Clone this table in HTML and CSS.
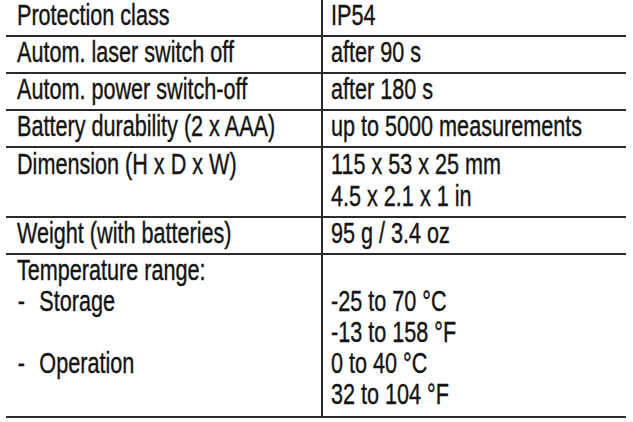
FILE: index.html
```html
<!DOCTYPE html>
<html lang="en">
<head>
<meta charset="utf-8">
<title>Technical data</title>
<link rel="stylesheet" href="styles.css">
</head>
<body>
<div class="spec">
  <div class="row">
    <div class="cell key"><div class="txt">Protection class</div></div>
    <div class="cell val"><div class="txt">IP54</div></div>
  </div>
  <div class="row">
    <div class="cell key"><div class="txt">Autom. laser switch off</div></div>
    <div class="cell val"><div class="txt">after 90 s</div></div>
  </div>
  <div class="row">
    <div class="cell key"><div class="txt">Autom. power switch-off</div></div>
    <div class="cell val"><div class="txt">after 180 s</div></div>
  </div>
  <div class="row">
    <div class="cell key"><div class="txt">Battery durability (2 x AAA)</div></div>
    <div class="cell val"><div class="txt">up to 5000 measurements</div></div>
  </div>
  <div class="row dim">
    <div class="cell key"><div class="txt">Dimension (H x D x W)</div></div>
    <div class="cell val"><div class="txt">115 x 53 x 25 mm<br>4.5 x 2.1 x 1 in</div></div>
  </div>
  <div class="row">
    <div class="cell key"><div class="txt">Weight (with batteries)</div></div>
    <div class="cell val"><div class="txt">95 g / 3.4 oz</div></div>
  </div>
  <div class="row temp">
    <div class="cell key">
      <div class="txt">
        <div class="line">Temperature range:</div>
        <div class="line sub"><span class="dash">-</span>Storage</div>
        <div class="line">&nbsp;</div>
        <div class="line sub"><span class="dash">-</span>Operation</div>
      </div>
    </div>
    <div class="cell val">
      <div class="txt">
        <div class="line">&nbsp;</div>
        <div class="line">-25 to 70 °C</div>
        <div class="line">-13 to 158 °F</div>
        <div class="line">0 to 40 °C</div>
        <div class="line">32 to 104 °F</div>
      </div>
    </div>
  </div>
</div>
<div class="note">* Strong sunlight and different surfaces may reduce the range</div>
</body>
</html>
```

FILE: styles.css
```css
html, body {
  margin: 0;
  padding: 0;
  background: #ffffff;
}

body {
  width: 633px;
  height: 422px;
  overflow: hidden;
  font-family: "Liberation Sans", Arial, sans-serif;
  color: #141414;
}

.spec {
  margin: 0 0 0 6px;
  width: 620px;
  display: flex;
  flex-direction: column;
}

.row {
  display: grid;
  grid-template-columns: 315px 1fr;
  border-bottom: 2px solid #2a2a2a;
}

.cell {
  font-size: 29px;
  line-height: 31px;
  padding-bottom: 4px;
  overflow: hidden;
  white-space: nowrap;
}

.key {
  padding-left: 11px;
}

.val {
  border-left: 2px solid #2a2a2a;
  padding-left: 8px;
}

.txt {
  transform: scaleX(0.745);
  transform-origin: left top;
  -webkit-text-stroke: 0.4px #141414;
}

.dim .cell {
  line-height: 32px;
}

.temp .cell {
  padding-bottom: 6px;
}

.sub {
  display: flex;
}

.dash {
  display: inline-block;
  width: 29px;
  padding-left: 1px;
}

.note {
  margin: 2px 0 0 6px;
  width: 600px;
  font-size: 20px;
  line-height: 20px;
  color: #777777;
  white-space: nowrap;
  overflow: hidden;
}
```
